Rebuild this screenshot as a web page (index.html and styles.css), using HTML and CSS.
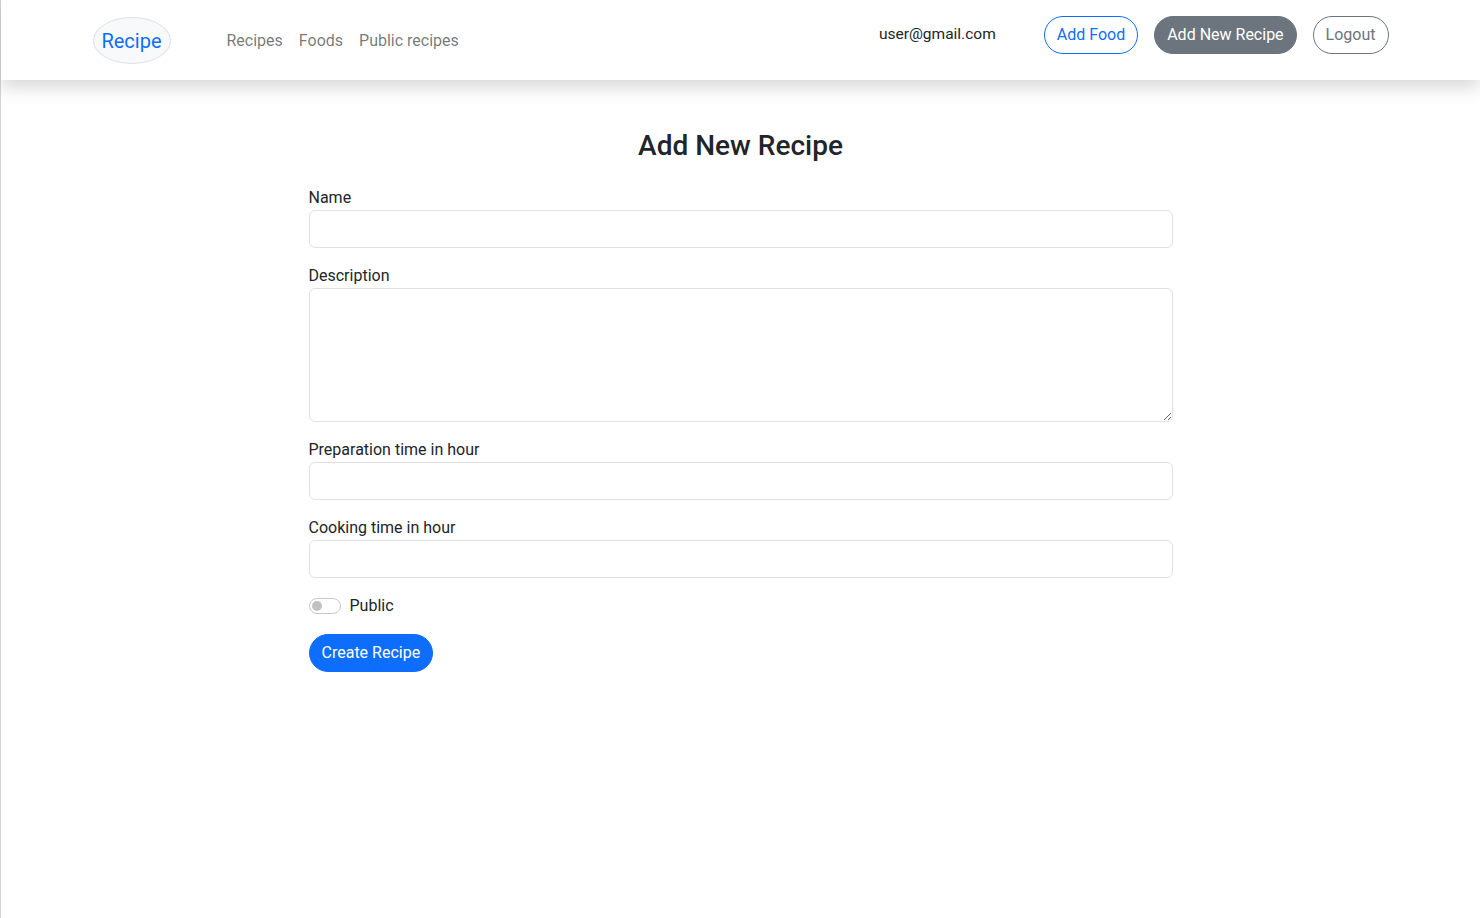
FILE: index.html
```html
<!DOCTYPE html>
<html lang="en">
<head>
<meta charset="utf-8">
<title>Add New Recipe</title>
<link rel="stylesheet" href="styles.css">
</head>
<body>
<div class="page">
  <header class="navbar">
    <div class="nav-inner">
      <div class="nav-left">
        <a class="brand" href="#">Recipe</a>
        <nav class="nav-links">
          <a class="nav-link" href="#">Recipes</a>
          <a class="nav-link" href="#">Foods</a>
          <a class="nav-link" href="#">Public recipes</a>
        </nav>
      </div>
      <div class="nav-right">
        <span class="email">user@gmail.com</span>
        <a class="btn btn-outline-primary" href="#">Add Food</a>
        <a class="btn btn-secondary" href="#">Add New Recipe</a>
        <a class="btn btn-outline-secondary" href="#">Logout</a>
      </div>
    </div>
  </header>

  <main class="content">
    <h2 class="title">Add New Recipe</h2>
    <form class="recipe-form">
      <div class="field">
        <label class="form-label" for="name">Name</label>
        <input class="form-control" id="name" type="text">
      </div>
      <div class="field">
        <label class="form-label" for="desc">Description</label>
        <textarea class="form-control textarea" id="desc"></textarea>
      </div>
      <div class="field">
        <label class="form-label" for="prep">Preparation time in hour</label>
        <input class="form-control" id="prep" type="text">
      </div>
      <div class="field">
        <label class="form-label" for="cook">Cooking time in hour</label>
        <input class="form-control" id="cook" type="text">
      </div>
      <div class="field switch-row">
        <span class="switch"><span class="knob"></span></span>
        <label class="switch-label">Public</label>
      </div>
      <button class="btn btn-primary" type="button">Create Recipe</button>
    </form>
  </main>
</div>
</body>
</html>
```

FILE: styles.css
```css
* { box-sizing: border-box; }

html, body {
  margin: 0;
  padding: 0;
  height: 100%;
}

body {
  font-family: Roboto, "Liberation Sans", sans-serif;
  font-size: 16px;
  line-height: 1.5;
  color: #212529;
  background: #fff;
}

.page {
  min-height: 100%;
  border-left: 1px solid #d4d4d4;
}

a { text-decoration: none; }

.navbar {
  height: 80px;
  background: #fff;
  box-shadow: 0 0.5rem 1rem rgba(0, 0, 0, 0.15);
  position: relative;
  z-index: 1;
}

.nav-inner {
  max-width: 1320px;
  margin: 0 auto;
  padding: 16px 12px 0;
  display: flex;
  justify-content: space-between;
  align-items: flex-start;
}

.nav-left {
  display: flex;
  align-items: center;
  padding-top: 1px;
}

.brand {
  display: inline-flex;
  align-items: center;
  justify-content: center;
  width: 78px;
  height: 47px;
  border-radius: 50%;
  background: #f8f9fa;
  border: 1px solid #dee2e6;
  color: #0d6efd;
  font-size: 20px;
}

.nav-links {
  display: flex;
  margin-left: 48px;
}

.nav-link {
  color: rgba(0, 0, 0, 0.55);
  padding: 8px 8px;
  font-size: 16px;
}

.nav-right {
  display: flex;
  align-items: center;
}

.email {
  margin-right: 48px;
  color: #212529;
  font-size: 15.5px;
}

.btn {
  display: inline-block;
  font-family: inherit;
  font-size: 16px;
  line-height: 1.5;
  padding: 6px 12px;
  border: 1px solid transparent;
  border-radius: 50rem;
  cursor: pointer;
}

.nav-right .btn + .btn { margin-left: 16px; }

.btn-outline-primary {
  color: #0d6efd;
  border-color: #0d6efd;
  background: transparent;
}

.btn-secondary {
  color: #fff;
  background: #6c757d;
  border-color: #6c757d;
}

.btn-outline-secondary {
  color: #6c757d;
  border-color: #6c757d;
  background: transparent;
}

.btn-primary {
  color: #fff;
  background: #0d6efd;
  border-color: #0d6efd;
}

.content {
  width: 864px;
  margin: 0 auto;
  padding-top: 49px;
}

.title {
  margin: 0 0 23px;
  text-align: center;
  font-size: 28px;
  font-weight: 500;
  line-height: 1.2;
}

.field {
  margin-bottom: 16px;
}

.form-label {
  display: block;
  margin-bottom: 0;
}

.form-control {
  display: block;
  width: 100%;
  height: 38px;
  padding: 6px 12px;
  font: inherit;
  color: #212529;
  background: #fff;
  border: 1px solid #dee2e6;
  border-radius: 6px;
}

.textarea {
  height: 134px;
  resize: vertical;
}

.switch-row {
  display: flex;
  align-items: center;
  height: 24px;
}

.switch {
  position: relative;
  width: 32px;
  height: 16px;
  border: 1px solid #c6c9cc;
  border-radius: 8px;
  margin-right: 8px;
  background: #fff;
}

.knob {
  position: absolute;
  left: 2px;
  top: 2px;
  width: 10px;
  height: 10px;
  border-radius: 50%;
  background: #bfc2c5;
}

.switch-label {
  color: #212529;
  padding-left: 1px;
}
```
